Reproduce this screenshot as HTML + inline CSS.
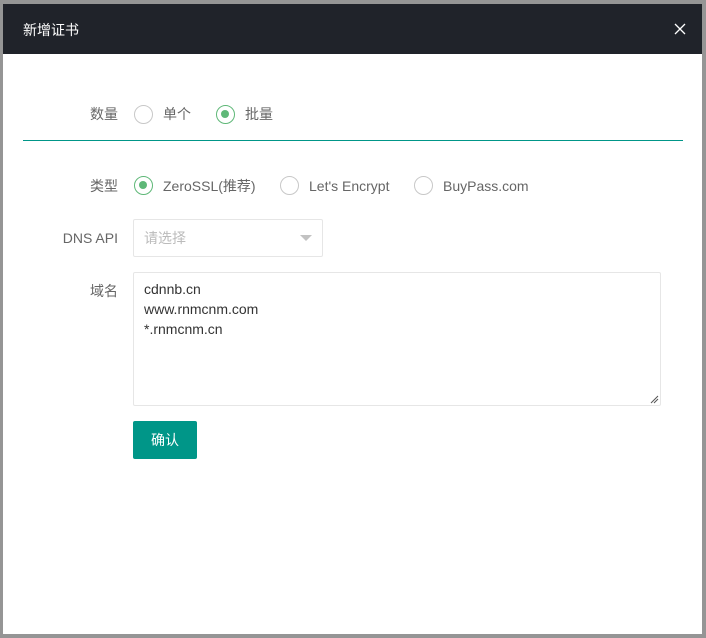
<!DOCTYPE html>
<html><head><meta charset="utf-8"><style>
*{margin:0;padding:0;box-sizing:border-box}
body{width:706px;height:638px;background:#959595;position:relative;overflow:hidden;font-family:"Liberation Sans","Noto Sans CJK SC",sans-serif;font-size:14px;color:#666}
.dlg{position:absolute;left:3px;top:4px;width:699px;height:630px;background:#fff}
.hd{position:absolute;left:0;top:0;width:100%;height:50px;background:#20232a;color:#fff}
.hd .t{position:absolute;left:20px;top:16px;font-size:14px;line-height:20px}
.x{position:absolute;right:16px;top:19px}
.a{position:absolute;line-height:20px}
.lab{position:absolute;width:115px;text-align:right;left:0;line-height:20px}
.r{position:absolute;width:19px;height:19px;border:1.5px solid #c8c8c8;border-radius:50%}
.r.on{border-color:#5fb878}
.r.on::after{content:"";position:absolute;left:4px;top:4px;width:8px;height:8px;border-radius:50%;background:#5fb878}
</style></head><body>
<div class="dlg">
<div class="hd"><div class="t">新增证书</div>
<svg class="x" width="12" height="12" viewBox="0 0 12 12"><path d="M1 1L11 11M11 1L1 11" stroke="#fff" stroke-width="1.3"/></svg></div>
<div class="lab" style="top:100px">数量</div>
<div class="r" style="left:131px;top:101px"></div><div class="a" style="left:160px;top:100px">单个</div>
<div class="r on" style="left:213px;top:101px"></div><div class="a" style="left:242px;top:100px">批量</div>
<div class="a" style="left:20px;top:136px;width:660px;height:1px;background:#009688"></div>
<div class="lab" style="top:172px">类型</div>
<div class="r on" style="left:131px;top:172px"></div><div class="a" style="left:160px;top:172px">ZeroSSL(推荐)</div>
<div class="r" style="left:277px;top:172px"></div><div class="a" style="left:306px;top:172px">Let's Encrypt</div>
<div class="r" style="left:411px;top:172px"></div><div class="a" style="left:440px;top:172px">BuyPass.com</div>
<div class="lab" style="top:224px">DNS API</div>
<div class="a" style="left:130px;top:215px;width:190px;height:38px;border:1px solid #e6e6e6;border-radius:2px"></div>
<div class="a" style="left:141px;top:224px;color:#bbb">请选择</div>
<div class="a" style="left:297px;top:231px;width:0;height:0;border-left:6px solid transparent;border-right:6px solid transparent;border-top:6px solid #c2c2c2"></div>
<div class="lab" style="top:277px">域名</div>
<div class="a" style="left:130px;top:268px;width:528px;height:134px;border:1px solid #e6e6e6;border-radius:2px"></div>
<div class="a" style="left:141px;top:275px;color:#333;line-height:20px">cdnnb.cn<br>www.rnmcnm.com<br>*.rnmcnm.cn</div>
<svg class="a" style="left:647px;top:391px" width="9" height="9"><path d="M1 8L8 1M4 8L8 4" stroke="#555" stroke-width="1"/></svg>
<div class="a" style="left:130px;top:417px;width:64px;height:38px;background:#009688;border-radius:2px;color:#fff;text-align:center;line-height:38px;font-size:14px">确认</div>
</div>
</body></html>
